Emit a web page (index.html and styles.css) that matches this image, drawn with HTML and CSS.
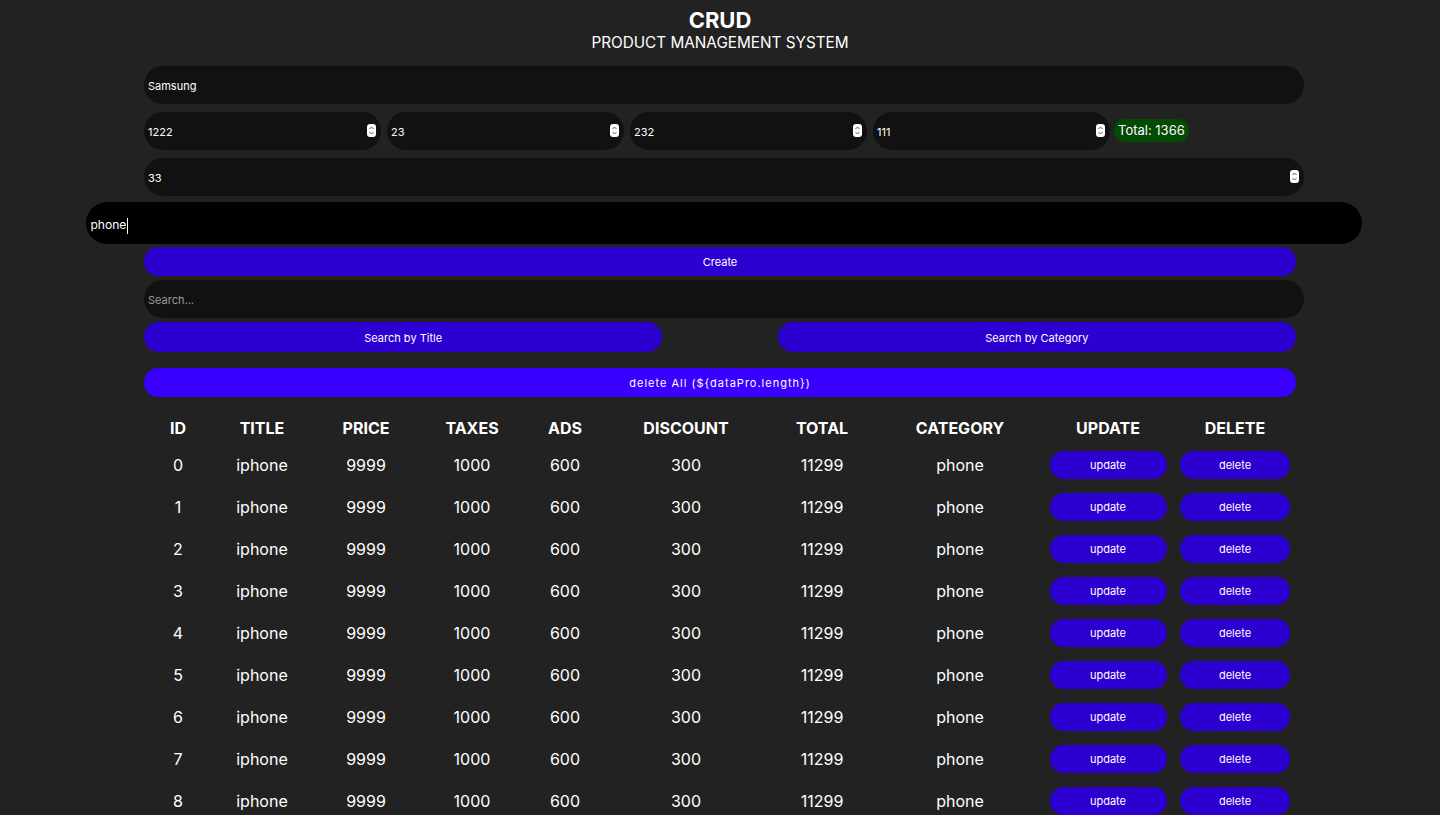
FILE: index.html
```html
<!DOCTYPE html>
<html lang="en">
<head>
<meta charset="utf-8">
<title>CRUD</title>
<link rel="stylesheet" href="styles.css">
</head>
<body>
<div class="crud">
  <header class="head">
    <h2 class="head-title">CRUD</h2>
    <p class="head-sub">PRODUCT MANAGEMENT SYSTEM</p>
  </header>

  <div class="inputs">
    <input class="field" type="text" value="Samsung" placeholder="title">
    <div class="price-row">
      <span class="num"><input class="field" type="text" value="1222"><span class="spin"><svg viewBox="0 0 9 13" width="9" height="13"><rect x="0" y="0" width="9" height="13" rx="3" fill="#fff"/><path d="M2.5 5 L4.5 3 L6.5 5" fill="none" stroke="#555" stroke-width="1"/><path d="M2.5 8 L4.5 10 L6.5 8" fill="none" stroke="#555" stroke-width="1"/></svg></span></span>
      <span class="num"><input class="field" type="text" value="23"><span class="spin"><svg viewBox="0 0 9 13" width="9" height="13"><rect x="0" y="0" width="9" height="13" rx="3" fill="#fff"/><path d="M2.5 5 L4.5 3 L6.5 5" fill="none" stroke="#555" stroke-width="1"/><path d="M2.5 8 L4.5 10 L6.5 8" fill="none" stroke="#555" stroke-width="1"/></svg></span></span>
      <span class="num"><input class="field" type="text" value="232"><span class="spin"><svg viewBox="0 0 9 13" width="9" height="13"><rect x="0" y="0" width="9" height="13" rx="3" fill="#fff"/><path d="M2.5 5 L4.5 3 L6.5 5" fill="none" stroke="#555" stroke-width="1"/><path d="M2.5 8 L4.5 10 L6.5 8" fill="none" stroke="#555" stroke-width="1"/></svg></span></span>
      <span class="num"><input class="field" type="text" value="111"><span class="spin"><svg viewBox="0 0 9 13" width="9" height="13"><rect x="0" y="0" width="9" height="13" rx="3" fill="#fff"/><path d="M2.5 5 L4.5 3 L6.5 5" fill="none" stroke="#555" stroke-width="1"/><path d="M2.5 8 L4.5 10 L6.5 8" fill="none" stroke="#555" stroke-width="1"/></svg></span></span>
      <small class="total">Total: 1366</small>
    </div>
    <span class="num num-full"><input class="field" type="text" value="33"><span class="spin"><svg viewBox="0 0 9 13" width="9" height="13"><rect x="0" y="0" width="9" height="13" rx="3" fill="#fff"/><path d="M2.5 5 L4.5 3 L6.5 5" fill="none" stroke="#555" stroke-width="1"/><path d="M2.5 8 L4.5 10 L6.5 8" fill="none" stroke="#555" stroke-width="1"/></svg></span></span>
    <div class="focus-wrap"><input class="field field-focus" type="text" value="phone"><span class="caret"></span></div>
    <button class="btn btn-create">Create</button>
  </div>

  <div class="search">
    <input class="field" type="text" placeholder="Search...">
    <div class="search-btns">
      <button class="btn btn-half">Search by Title</button>
      <button class="btn btn-half">Search by Category</button>
    </div>
  </div>

  <div class="delete-all">
    <button class="btn btn-delall">delete All (${dataPro.length})</button>
  </div>

  <table class="tbl">
    <colgroup>
      <col class="c1"><col class="c2"><col class="c3"><col class="c4"><col class="c5">
      <col class="c6"><col class="c7"><col class="c8"><col class="c9"><col class="c10">
    </colgroup>
    <thead>
      <tr><th>ID</th><th>TITLE</th><th>PRICE</th><th>TAXES</th><th>ADS</th><th>DISCOUNT</th><th>TOTAL</th><th>CATEGORY</th><th>UPDATE</th><th>DELETE</th></tr>
    </thead>
    <tbody>
      <tr><td>0</td><td>iphone</td><td>9999</td><td>1000</td><td>600</td><td>300</td><td>11299</td><td>phone</td><td><button class="btn btn-upd">update</button></td><td><button class="btn btn-del">delete</button></td></tr>
      <tr><td>1</td><td>iphone</td><td>9999</td><td>1000</td><td>600</td><td>300</td><td>11299</td><td>phone</td><td><button class="btn btn-upd">update</button></td><td><button class="btn btn-del">delete</button></td></tr>
      <tr><td>2</td><td>iphone</td><td>9999</td><td>1000</td><td>600</td><td>300</td><td>11299</td><td>phone</td><td><button class="btn btn-upd">update</button></td><td><button class="btn btn-del">delete</button></td></tr>
      <tr><td>3</td><td>iphone</td><td>9999</td><td>1000</td><td>600</td><td>300</td><td>11299</td><td>phone</td><td><button class="btn btn-upd">update</button></td><td><button class="btn btn-del">delete</button></td></tr>
      <tr><td>4</td><td>iphone</td><td>9999</td><td>1000</td><td>600</td><td>300</td><td>11299</td><td>phone</td><td><button class="btn btn-upd">update</button></td><td><button class="btn btn-del">delete</button></td></tr>
      <tr><td>5</td><td>iphone</td><td>9999</td><td>1000</td><td>600</td><td>300</td><td>11299</td><td>phone</td><td><button class="btn btn-upd">update</button></td><td><button class="btn btn-del">delete</button></td></tr>
      <tr><td>6</td><td>iphone</td><td>9999</td><td>1000</td><td>600</td><td>300</td><td>11299</td><td>phone</td><td><button class="btn btn-upd">update</button></td><td><button class="btn btn-del">delete</button></td></tr>
      <tr><td>7</td><td>iphone</td><td>9999</td><td>1000</td><td>600</td><td>300</td><td>11299</td><td>phone</td><td><button class="btn btn-upd">update</button></td><td><button class="btn btn-del">delete</button></td></tr>
      <tr><td>8</td><td>iphone</td><td>9999</td><td>1000</td><td>600</td><td>300</td><td>11299</td><td>phone</td><td><button class="btn btn-upd">update</button></td><td><button class="btn btn-del">delete</button></td></tr>
    </tbody>
  </table>
</div>
</body>
</html>
```

FILE: styles.css
```css
html, body {
  margin: 0;
  padding: 0;
  background: #222222;
  color: #ffffff;
  font-family: Inter, "Noto Sans", "Liberation Sans", sans-serif;
  overflow: hidden;
  height: 815px;
}

.crud {
  width: 80%;
  margin: 0 auto;
}

.head {
  text-align: center;
  padding-top: 7px;
  height: 59px;
}
.head-title {
  margin: 0;
  font-size: 22px;
  line-height: 26px;
  font-weight: 700;
}
.head-sub {
  margin: 0;
  font-size: 15.3px;
  line-height: 20px;
  font-weight: 400;
}

.field {
  display: block;
  box-sizing: border-box;
  width: calc(100% + 8px);
  height: 38px;
  padding: 2px 4px 0;
  border: none;
  outline: none;
  border-radius: 20px;
  background: #111111;
  color: #ffffff;
  font-family: Inter, "Noto Sans", "Liberation Sans", sans-serif;
  font-size: 11px;
}
.field::placeholder {
  color: #9a9a9a;
}

.inputs {
  display: flex;
  flex-direction: column;
}

.price-row {
  display: flex;
  align-items: center;
  gap: 6px;
  margin-top: 8px;
}
.num {
  position: relative;
  display: block;
}
.price-row .num {
  width: 237px;
}
.price-row .num .field {
  width: 237px;
}
.num-full {
  margin-top: 8px;
}
.spin {
  position: absolute;
  right: 5px;
  top: 12px;
  width: 9px;
  height: 13px;
  line-height: 0;
}
.num-full .spin {
  right: -3px;
}

.total {
  margin-left: -2px;
  background: #024b02;
  color: #ffffff;
  font-size: 13px;
  line-height: 17px;
  padding: 3px 4px;
  border-radius: 11px;
  margin-top: -1px;
}

.focus-wrap {
  position: relative;
  margin-top: 8px;
}
.field-focus {
  background: #000000;
  transform: scale(1.1);
}
.caret {
  position: absolute;
  left: -17px;
  top: 14px;
  width: 1px;
  height: 16px;
  background: #fff;
}

.btn {
  border: none;
  color: #ffffff;
  background: #2d00d2;
  font-family: Inter, "Noto Sans", "Liberation Sans", sans-serif;
  font-size: 11px;
  cursor: pointer;
}
.btn-create {
  margin-top: 5px;
  width: 100%;
  height: 29px;
  border-radius: 15px;
}

.search {
  margin-top: 4px;
}
.search-btns {
  display: flex;
  justify-content: space-between;
  margin-top: 4px;
}
.btn-half {
  width: 45%;
  height: 30px;
  border-radius: 15px;
  padding-top: 2px;
}

.delete-all {
  margin-top: 16px;
}
.btn-delall {
  width: 100%;
  height: 29px;
  border-radius: 15px;
  background: #3a00ff;
  letter-spacing: 1px;
}

.tbl {
  width: 100%;
  margin-top: 13px;
  border-collapse: collapse;
  table-layout: fixed;
  text-align: center;
}
.c1 { width: 68px; }
.c2 { width: 100px; }
.c3 { width: 108px; }
.c4 { width: 104px; }
.c5 { width: 82px; }
.c6 { width: 160px; }
.c7 { width: 112px; }
.c8 { width: 164px; }
.c9 { width: 132px; }
.c10 { width: 122px; }

.tbl th {
  font-size: 16px;
  font-weight: 700;
  height: 35px;
  padding: 0;
  vertical-align: middle;
}
.tbl td {
  font-size: 16px;
  height: 42px;
  box-sizing: border-box;
  padding: 0 0 3px;
  vertical-align: middle;
}
.btn-upd {
  width: 117px;
  height: 28px;
  border-radius: 14px;
  padding-top: 2px;
}
.btn-del {
  width: 110px;
  height: 28px;
  border-radius: 14px;
  padding-top: 2px;
}
```
